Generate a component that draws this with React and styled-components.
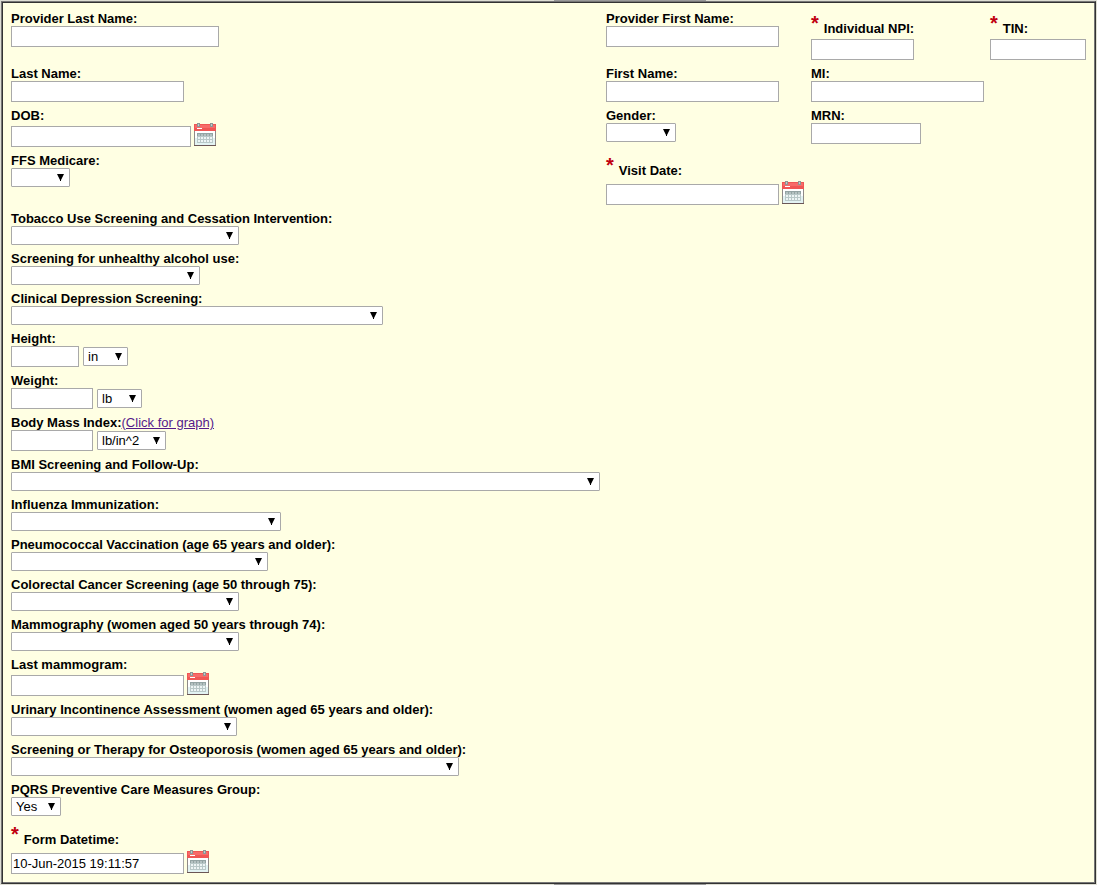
import { useId } from 'react';
import styled, { createGlobalStyle } from 'styled-components';

const patientRows = [
  [
    { label: 'Provider Last Name:', type: 'text', width: 208 },
    { label: 'Provider First Name:', type: 'text', width: 173 },
    { label: 'Individual NPI:', type: 'text', width: 103, required: true },
    { label: 'TIN:', type: 'text', width: 96, required: true },
  ],
  [
    { label: 'Last Name:', type: 'text', width: 173 },
    { label: 'First Name:', type: 'text', width: 173 },
    { label: 'MI:', type: 'text', width: 173 },
  ],
  [
    { label: 'DOB:', type: 'date', width: 180 },
    { label: 'Gender:', type: 'select', width: 70 },
    { label: 'MRN:', type: 'text', width: 110 },
  ],
  [
    { label: 'FFS Medicare:', type: 'select', width: 59 },
    { label: 'Visit Date:', type: 'date', width: 173, required: true },
  ],
];

const measures = [
  { label: 'Tobacco Use Screening and Cessation Intervention:', type: 'select', width: 228 },
  { label: 'Screening for unhealthy alcohol use:', type: 'select', width: 189 },
  { label: 'Clinical Depression Screening:', type: 'select', width: 372 },
  { label: 'Height:', type: 'measure', width: 68, unit: 'in', unitWidth: 45 },
  { label: 'Weight:', type: 'measure', width: 82, unit: 'lb', unitWidth: 45 },
  { label: 'Body Mass Index:', link: '(Click for graph)', type: 'measure', width: 82, unit: 'lb/in^2', unitWidth: 69 },
  { label: 'BMI Screening and Follow-Up:', type: 'select', width: 589 },
  { label: 'Influenza Immunization:', type: 'select', width: 270 },
  { label: 'Pneumococcal Vaccination (age 65 years and older):', type: 'select', width: 257 },
  { label: 'Colorectal Cancer Screening (age 50 through 75):', type: 'select', width: 228 },
  { label: 'Mammography (women aged 50 years through 74):', type: 'select', width: 228 },
  { label: 'Last mammogram:', type: 'date', width: 173 },
  { label: 'Urinary Incontinence Assessment (women aged 65 years and older):', type: 'select', width: 226 },
  { label: 'Screening or Therapy for Osteoporosis (women aged 65 years and older):', type: 'select', width: 448 },
  { label: 'PQRS Preventive Care Measures Group:', type: 'select', width: 50, value: 'Yes' },
  { label: 'Form Datetime:', type: 'date', width: 173, required: true, value: '10-Jun-2015 19:11:57' },
];

function Dropdown({ id, width, value = '', label }) {
  return (
    <SelectBox $width={width}>
      <Select id={id} aria-label={label} defaultValue={value}>
        <option>{value}</option>
      </Select>
      <Arrow viewBox="0 0 7 7" aria-hidden="true">
        <path d="M0 0H7L4 6V7H3V6Z" />
      </Arrow>
    </SelectBox>
  );
}

function CalendarIcon() {
  return (
    <svg width="22" height="24" viewBox="0 0 22 24" aria-hidden="true">
      <rect x="0" y="1" width="22" height="22" fill="#8f8a88" />
      <rect x="1" y="8" width="20" height="7" fill="#fff" />
      <rect x="1" y="15" width="20" height="7" fill="#e3f3f3" />
      <rect x="0" y="1" width="22" height="7" fill="#f05654" />
      <rect x="1" y="2" width="20" height="3" fill="#f76b69" />
      <rect x="3" y="5" width="5" height="1" fill="#fff" />
      <path d="M3 0h3v4h-3zM16 0h3v4h-3z" fill="#8d9696" />
      <path d="M4 1h1v2h-1zM17 1h1v2h-1z" fill="#c3caca" />
      <rect x="3" y="10" width="16" height="10" fill="#b9c8c8" />
      <rect x="3" y="10" width="16" height="3" fill="#93a3a3" />
      <path
        d="M4 11h2v2h-2zM7 11h2v2h-2zM10 11h2v2h-2zM13 11h2v2h-2zM16 11h2v2h-2z"
        fill="#b4c1c1"
      />
      <path
        d="M4 14h2v2h-2zM7 14h2v2h-2zM10 14h2v2h-2zM13 14h2v2h-2zM16 14h2v2h-2zM4 17h2v2h-2zM7 17h2v2h-2zM10 17h2v2h-2zM13 17h2v2h-2zM16 17h2v2h-2z"
        fill="#eef5f5"
      />
      <rect x="0" y="22" width="22" height="1" fill="#6b5656" />
    </svg>
  );
}

function Field({ label, link, type, width, required, value, unit, unitWidth }) {
  const id = useId();

  return (
    <FieldBox>
      <LabelRow $required={required}>
        {required && <Star>*</Star>}
        <Label htmlFor={id}>{label}</Label>
        {link && <GraphLink href="#graph">{link}</GraphLink>}
      </LabelRow>
      {type === 'select' && <Dropdown id={id} width={width} value={value} />}
      {type === 'text' && <Input id={id} $width={width} />}
      {type === 'measure' && (
        <Controls>
          <Input id={id} $width={width} />
          <Dropdown width={unitWidth} value={unit} label={`${label} unit`} />
        </Controls>
      )}
      {type === 'date' && (
        <DateControls>
          <Input id={id} $width={width} defaultValue={value} />
          <CalendarButton type="button" aria-label="Choose a date">
            <CalendarIcon />
          </CalendarButton>
        </DateControls>
      )}
    </FieldBox>
  );
}

export default function App() {
  return (
    <>
      <GlobalStyle />
      <Form>
        {patientRows.map((row, i) => (
          <PatientRow key={i}>
            {row.map((field) => (
              <Field key={field.label} {...field} />
            ))}
          </PatientRow>
        ))}
        {measures.map((field) => (
          <Field key={field.label} {...field} />
        ))}
      </Form>
    </>
  );
}

const GlobalStyle = createGlobalStyle`
  body {
    margin: 0;
    padding: 1px;
    background:
      linear-gradient(#999, #999) 58.6% 0 / 152px 1px no-repeat,
      linear-gradient(#999, #999) 58.6% 100% / 152px 1px no-repeat,
      #deded4;
    font-family: "Liberation Sans", Arial, sans-serif;
    font-size: 13px;
    color: #000;
  }

  * {
    box-sizing: border-box;
  }
`;

const Form = styled.form`
  display: flex;
  flex-direction: column;
  gap: 6px;
  padding: 9px;
  border: 1px solid;
  border-color: #777 #333 #333 #777;
  box-shadow: inset 1px 1px #333, inset -1px -1px #777;
  background: #ffffe3;
`;

const PatientRow = styled.div`
  display: grid;
  grid-template-columns: 595fr 205fr 179fr 96fr;
`;

const FieldBox = styled.div`
  display: flex;
  flex-direction: column;
  align-items: flex-start;
  min-width: 0;
`;

const LabelRow = styled.div`
  display: flex;
  align-items: flex-end;
  height: ${({ $required }) => ($required ? '28px' : '15px')};
  padding-bottom: ${({ $required }) => ($required ? '3px' : '0')};
  line-height: 15px;
  white-space: nowrap;
`;

const Label = styled.label`
  font-weight: bold;
`;

const Star = styled.span`
  align-self: flex-start;
  margin-right: 5px;
  font-size: 20px;
  font-weight: bold;
  line-height: 24px;
  color: #c00010;
`;

const GraphLink = styled.a`
  color: #551a8b;
`;

const Controls = styled.div`
  display: flex;
  align-items: center;
  gap: 4px;
`;

const DateControls = styled.div`
  display: flex;
  align-items: flex-end;
  gap: 3px;
`;

const Input = styled.input`
  width: ${({ $width }) => $width}px;
  height: 21px;
  padding: 1px;
  border: 1px solid #a9a9a9;
  background: #fff;
  font: inherit;
  color: inherit;
`;

const SelectBox = styled.div`
  display: grid;
  align-items: center;
  width: ${({ $width }) => $width}px;
  height: 19px;
`;

const Select = styled.select`
  grid-area: 1 / 1;
  width: 100%;
  height: 19px;
  padding: 0 4px;
  border: 1px solid #a9a9a9;
  border-radius: 1px;
  background: #fff;
  font: inherit;
  color: inherit;
  appearance: none;
`;

const Arrow = styled.svg`
  grid-area: 1 / 1;
  justify-self: end;
  width: 7px;
  height: 7px;
  margin-right: 6px;
  pointer-events: none;
`;

const CalendarButton = styled.button`
  display: flex;
  padding: 0;
  border: 0;
  background: none;
  cursor: pointer;
`;
